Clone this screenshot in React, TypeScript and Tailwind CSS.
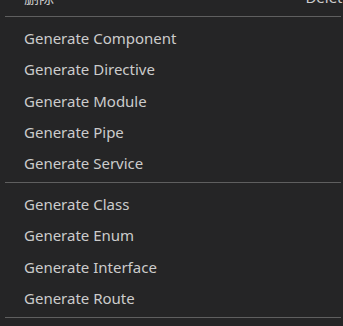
import React from "react";

const groupA = ["Generate Component", "Generate Directive", "Generate Module", "Generate Pipe", "Generate Service"];
const groupB = ["Generate Class", "Generate Enum", "Generate Interface", "Generate Route"];

function Item({ label, right }: { label: string; right?: string }) {
  return (
    <div className="flex h-[31.3px] items-center justify-between pl-6 pr-0">
      <span>{label}</span>
      {right && <span className="mr-[-8px]">{right}</span>}
    </div>
  );
}

function Sep() {
  return (
    <div className="pt-[3px] pb-[5.5px] pl-[5px] pr-[2px]">
      <div className="h-px bg-[#5f5f5f]" />
    </div>
  );
}

export default function App() {
  return (
    <div
      className="h-[326px] w-[343px] overflow-hidden bg-[#252526] text-[15px] text-[#cccccc]"
      style={{ fontFamily: '"Noto Sans", "Noto Sans CJK SC", sans-serif' }}
    >
      <div className="-mt-[18px]">
        <Item label="删除" right="Delete" />
        <Sep />
        {groupA.map((l) => (
          <Item key={l} label={l} />
        ))}
        <Sep />
        {groupB.map((l) => (
          <Item key={l} label={l} />
        ))}
        <Sep />
      </div>
    </div>
  );
}
